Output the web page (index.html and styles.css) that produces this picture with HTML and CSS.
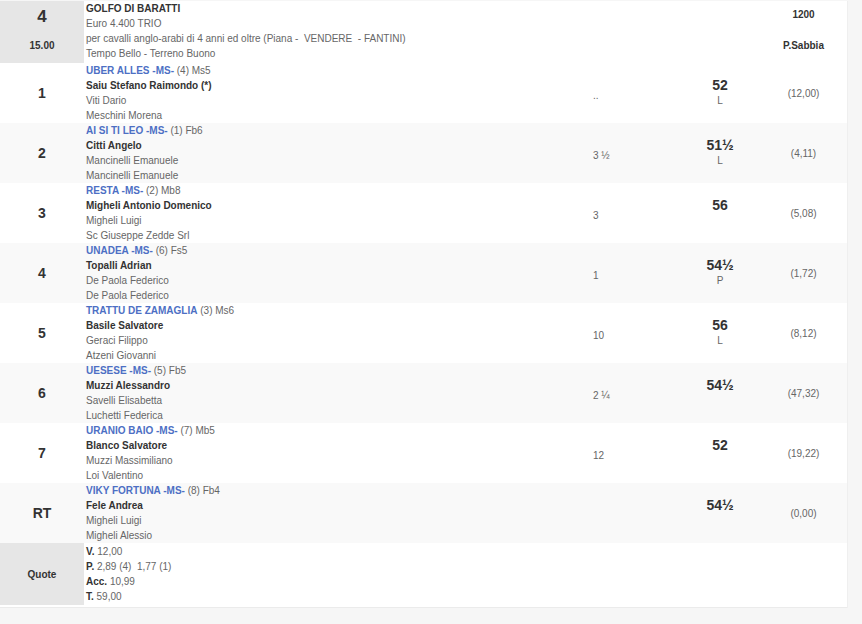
FILE: index.html
```html
<!DOCTYPE html>
<html lang="it">
<head>
<meta charset="utf-8">
<title>Corsa 4</title>
<link rel="stylesheet" href="styles.css">
</head>
<body>
<div class="race">
  <div class="row head">
    <div class="h-num">
      <span class="race-no">4</span>
      <span class="time">15.00</span>
    </div>
    <div class="c-info">
      <div class="b">GOLFO DI BARATTI</div>
      <div>Euro 4.400 TRIO</div>
      <div>per cavalli anglo-arabi di 4 anni ed oltre (Piana -&nbsp; VENDERE&nbsp; - FANTINI)</div>
      <div>Tempo Bello - Terreno Buono</div>
    </div>
    <div class="c-dist"></div>
    <div class="c-wt"></div>
    <div class="h-track">
      <span class="b dist-m">1200</span>
      <span class="b track">P.Sabbia</span>
    </div>
  </div>

  <div class="row">
    <div class="c-num">1</div>
    <div class="c-info">
      <div><span class="horse">UBER ALLES -MS-</span> (4) Ms5</div>
      <div class="b">Saiu Stefano Raimondo (*)</div>
      <div>Viti Dario</div>
      <div>Meschini Morena</div>
    </div>
    <div class="c-dist">..</div>
    <div class="c-wt"><span class="kg">52</span><span class="tag">L</span></div>
    <div class="c-odds">(12,00)</div>
  </div>

  <div class="row alt">
    <div class="c-num">2</div>
    <div class="c-info">
      <div><span class="horse">AI SI TI LEO -MS-</span> (1) Fb6</div>
      <div class="b">Citti Angelo</div>
      <div>Mancinelli Emanuele</div>
      <div>Mancinelli Emanuele</div>
    </div>
    <div class="c-dist">3 ½</div>
    <div class="c-wt"><span class="kg">51½</span><span class="tag">L</span></div>
    <div class="c-odds">(4,11)</div>
  </div>

  <div class="row">
    <div class="c-num">3</div>
    <div class="c-info">
      <div><span class="horse">RESTA -MS-</span> (2) Mb8</div>
      <div class="b">Migheli Antonio Domenico</div>
      <div>Migheli Luigi</div>
      <div>Sc Giuseppe Zedde Srl</div>
    </div>
    <div class="c-dist">3</div>
    <div class="c-wt"><span class="kg">56</span><span class="tag">&nbsp;</span></div>
    <div class="c-odds">(5,08)</div>
  </div>

  <div class="row alt">
    <div class="c-num">4</div>
    <div class="c-info">
      <div><span class="horse">UNADEA -MS-</span> (6) Fs5</div>
      <div class="b">Topalli Adrian</div>
      <div>De Paola Federico</div>
      <div>De Paola Federico</div>
    </div>
    <div class="c-dist">1</div>
    <div class="c-wt"><span class="kg">54½</span><span class="tag">P</span></div>
    <div class="c-odds">(1,72)</div>
  </div>

  <div class="row">
    <div class="c-num">5</div>
    <div class="c-info">
      <div><span class="horse">TRATTU DE ZAMAGLIA</span> (3) Ms6</div>
      <div class="b">Basile Salvatore</div>
      <div>Geraci Filippo</div>
      <div>Atzeni Giovanni</div>
    </div>
    <div class="c-dist">10</div>
    <div class="c-wt"><span class="kg">56</span><span class="tag">L</span></div>
    <div class="c-odds">(8,12)</div>
  </div>

  <div class="row alt">
    <div class="c-num">6</div>
    <div class="c-info">
      <div><span class="horse">UESESE -MS-</span> (5) Fb5</div>
      <div class="b">Muzzi Alessandro</div>
      <div>Savelli Elisabetta</div>
      <div>Luchetti Federica</div>
    </div>
    <div class="c-dist">2 ¼</div>
    <div class="c-wt"><span class="kg">54½</span><span class="tag">&nbsp;</span></div>
    <div class="c-odds">(47,32)</div>
  </div>

  <div class="row">
    <div class="c-num">7</div>
    <div class="c-info">
      <div><span class="horse">URANIO BAIO -MS-</span> (7) Mb5</div>
      <div class="b">Blanco Salvatore</div>
      <div>Muzzi Massimiliano</div>
      <div>Loi Valentino</div>
    </div>
    <div class="c-dist">12</div>
    <div class="c-wt"><span class="kg">52</span><span class="tag">&nbsp;</span></div>
    <div class="c-odds">(19,22)</div>
  </div>

  <div class="row alt">
    <div class="c-num">RT</div>
    <div class="c-info">
      <div><span class="horse">VIKY FORTUNA -MS-</span> (8) Fb4</div>
      <div class="b">Fele Andrea</div>
      <div>Migheli Luigi</div>
      <div>Migheli Alessio</div>
    </div>
    <div class="c-dist"></div>
    <div class="c-wt"><span class="kg">54½</span><span class="tag">&nbsp;</span></div>
    <div class="c-odds">(0,00)</div>
  </div>

  <div class="row quote">
    <div class="c-num gray q">Quote</div>
    <div class="c-info">
      <div><span class="b">V.</span> 12,00</div>
      <div><span class="b">P.</span> 2,89 (4)&nbsp; 1,77 (1)</div>
      <div><span class="b">Acc.</span> 10,99</div>
      <div><span class="b">T.</span> 59,00</div>
    </div>
    <div class="c-dist"></div>
    <div class="c-wt"></div>
    <div class="c-odds"></div>
  </div>
</div>
</body>
</html>
```

FILE: styles.css
```css
html, body {
  margin: 0;
  padding: 0;
}

body {
  background: #f6f6f6;
  font-family: "Liberation Sans", Arial, sans-serif;
  font-size: 10px;
  color: #666;
  padding-top: 1px;
}

.race {
  width: 847px;
  background: #fff;
  padding-bottom: 2px;
  border-bottom: 1px solid #ebebeb;
  box-shadow: 1px 0 0 #efefef;
}

.row {
  display: grid;
  grid-template-columns: 84px 501px 95px 80px 87px;
  height: 60px;
  line-height: 15px;
}

.row.alt {
  background: #f9f9f9;
}

.row.head {
  height: 62px;
}

.row.quote {
  height: 62px;
}

.b {
  font-weight: bold;
  color: #333;
}

.horse {
  font-weight: bold;
  color: #4d6fc4;
}

.c-num {
  display: flex;
  align-items: center;
  justify-content: center;
  font-size: 14px;
  font-weight: bold;
  color: #333;
}

.gray {
  background: #e6e6e6;
}

.h-num {
  background: #e6e6e6;
  display: flex;
  flex-direction: column;
  align-items: center;
  font-weight: bold;
  color: #333;
}

.race-no {
  font-size: 17px;
  line-height: 20px;
  margin-top: 6px;
}

.time {
  font-size: 10px;
  line-height: 14px;
  margin-top: 12px;
}

.h-track {
  display: flex;
  flex-direction: column;
  align-items: center;
}

.dist-m {
  line-height: 14px;
  margin-top: 7px;
}

.track {
  line-height: 14px;
  margin-top: 17px;
}

.q {
  font-size: 10px;
}

.c-info {
  padding-left: 2px;
  white-space: nowrap;
}

.quote .c-info {
  padding-top: 1px;
}

.c-dist {
  display: flex;
  align-items: center;
  padding-left: 8px;
  padding-top: 4px;
  color: #666;
}

.c-wt {
  display: flex;
  flex-direction: column;
  justify-content: center;
  align-items: center;
}

.kg {
  font-size: 14px;
  font-weight: bold;
  color: #333;
  line-height: 16px;
}

.tag {
  line-height: 16px;
}

.c-odds {
  display: flex;
  align-items: center;
  justify-content: center;
}
```
